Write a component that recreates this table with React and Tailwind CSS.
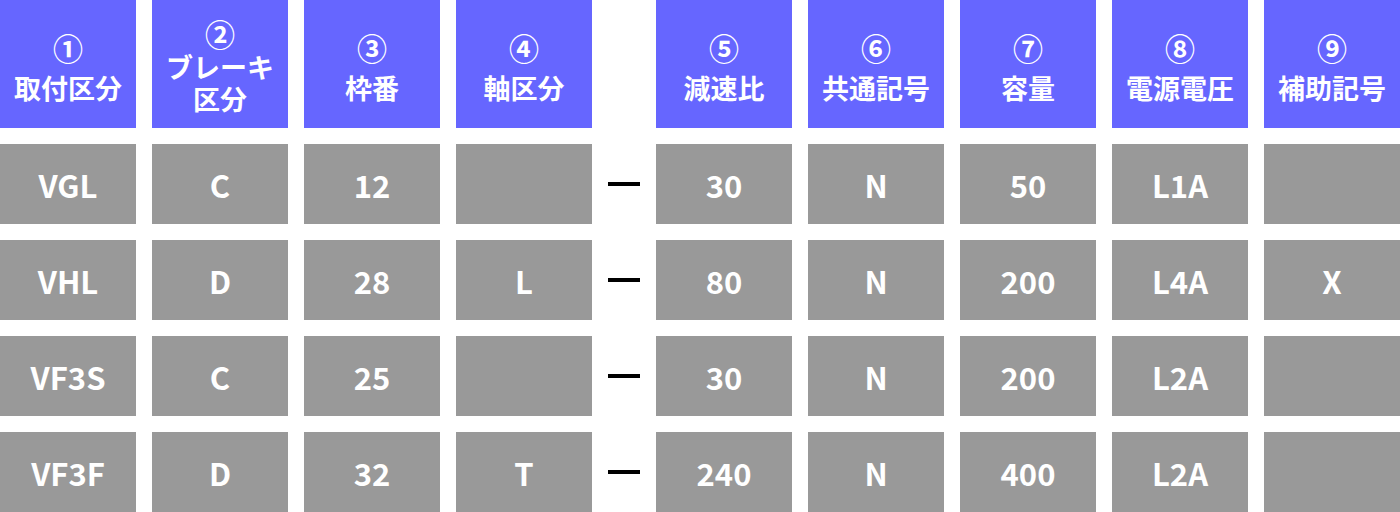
import React from "react";

const headers = [
  { n: "①", label: "取付区分" },
  { n: "②", label: "ブレーキ区分", wrap: true },
  { n: "③", label: "枠番" },
  { n: "④", label: "軸区分" },
  null,
  { n: "⑤", label: "減速比" },
  { n: "⑥", label: "共通記号" },
  { n: "⑦", label: "容量" },
  { n: "⑧", label: "電源電圧" },
  { n: "⑨", label: "補助記号" },
];

const rows = [
  ["VGL", "C", "12", "", null, "30", "N", "50", "L1A", ""],
  ["VHL", "D", "28", "L", null, "80", "N", "200", "L4A", "X"],
  ["VF3S", "C", "25", "", null, "30", "N", "200", "L2A", ""],
  ["VF3F", "D", "32", "T", null, "240", "N", "400", "L2A", ""],
];

const circleFont = { fontFamily: '"Noto Sans CJK KR", "Noto Sans CJK JP", sans-serif' };

export default function App() {
  return (
    <div
      className="w-[1400px] h-[512px] bg-white grid grid-cols-[136px_136px_136px_136px_32px_136px_136px_136px_136px_136px] grid-rows-[128px_80px_80px_80px_80px] gap-4 font-bold text-white"
      style={{ fontFamily: '"Noto Sans CJK JP", "Noto Sans", sans-serif' }}
    >
      {headers.map((h, i) =>
        h ? (
          h.wrap ? (
            <div
              key={"h" + i}
              className="bg-[#6666ff] flex flex-col items-center text-center pt-[16px]"
            >
              <div className="text-[30px] leading-[34px] font-bold" style={circleFont}>
                {h.n}
              </div>
              <div className="text-[27px] leading-[32px] mt-px">
                <div>ブレーキ</div>
                <div>区分</div>
              </div>
            </div>
          ) : (
            <div
              key={"h" + i}
              className="bg-[#6666ff] flex flex-col items-center text-center pt-[30px]"
            >
              <div className="text-[30px] leading-[34px] font-bold" style={circleFont}>
                {h.n}
              </div>
              <div className="text-[27px] leading-[34px] mt-[7px]">{h.label}</div>
            </div>
          )
        ) : (
          <div key={"h" + i} />
        )
      )}
      {rows.map((r, ri) =>
        r.map((c, ci) =>
          c === null ? (
            <div key={ri + "-" + ci} className="flex items-center justify-center">
              <div className="w-8 h-1 bg-black" />
            </div>
          ) : (
            <div
              key={ri + "-" + ci}
              className="bg-[#999999] flex items-center justify-center text-[31px] leading-none"
            >
              {c}
            </div>
          )
        )
      )}
    </div>
  );
}
